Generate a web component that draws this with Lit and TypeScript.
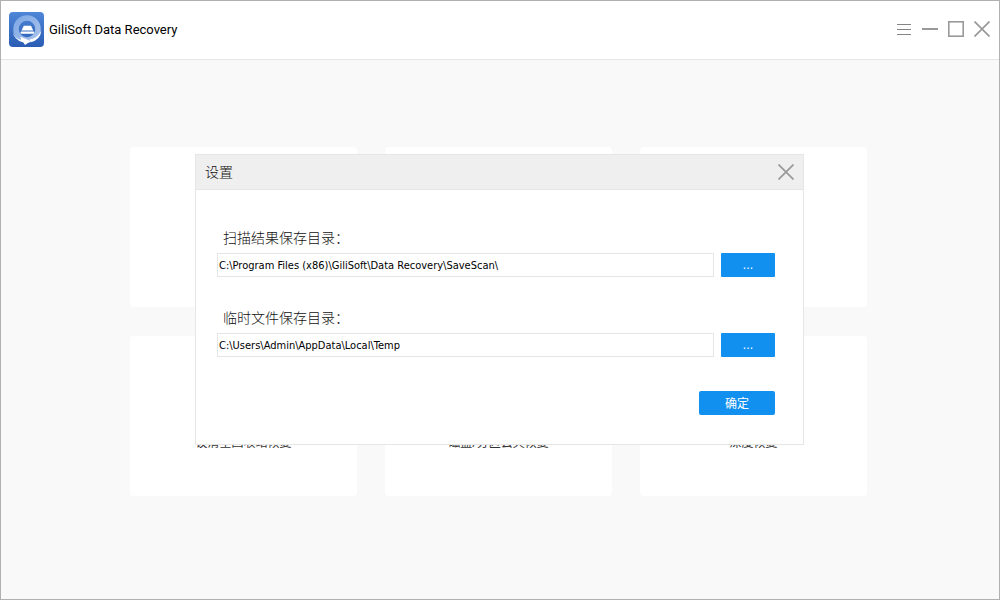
import { LitElement, html, css, svg } from "lit";
import { customElement, property } from "lit/decorators.js";

const cross = svg`<path d="M0.5 0.5 L15.5 15.5 M15.5 0.5 L0.5 15.5" />`;

@customElement("title-bar")
export class TitleBar extends LitElement {
  static styles = css`
    :host {
      display: block;
    }
    .bar {
      display: flex;
      align-items: center;
      box-sizing: border-box;
      height: 59px;
      padding: 0 8px 2px;
      background: #fff;
      border-bottom: 1px solid #e6e6e6;
    }
    .logo {
      display: block;
      width: 35px;
      height: 35px;
    }
    .name {
      flex: 1;
      margin: 0;
      padding: 2px 0 0 5px;
      font-family: Roboto, sans-serif;
      font-size: 13px;
      font-weight: 400;
      line-height: 18px;
      color: #000;
    }
    .controls {
      display: flex;
      gap: 8px;
    }
    .control {
      display: flex;
      align-items: center;
      justify-content: center;
      width: 18px;
      height: 18px;
      padding: 0;
      border: 0;
      background: none;
    }
    .glyph {
      display: block;
      width: 16px;
      height: 16px;
      fill: none;
      stroke: #999;
      stroke-width: 2;
    }
    .cross {
      stroke-width: 1.7;
    }
    .thin {
      stroke-width: 1;
      stroke: #858585;
    }
  `;

  render() {
    return html`
      <header class="bar">
        <svg class="logo" viewBox="0 0 35 35" aria-hidden="true">
          <defs>
            <linearGradient id="tile" x1="0" y1="0" x2="0" y2="1">
              <stop offset="0" stop-color="#4f86d8" />
              <stop offset="1" stop-color="#2a5db3" />
            </linearGradient>
            <linearGradient id="ring" x1="0" y1="0" x2="1" y2="1">
              <stop offset="0" stop-color="#7fa9e6" />
              <stop offset="1" stop-color="#a9c3ea" />
            </linearGradient>
          </defs>
          <rect width="35" height="35" rx="4" fill="url(#tile)" />
          <circle cx="18" cy="17" r="11" fill="none" stroke="url(#ring)" stroke-width="5.5" />
          <path d="M3.7 18.5 Q5 26 12 28 L11.5 24.7 L21.7 29 L16 33 L14.5 30.5 Q4.5 28 3.7 18.5 Z" fill="#fff" />
          <path d="M32.3 18.5 Q31.5 28 21.7 30 L20.5 27.6 Q28.5 26.5 32.3 18.5 Z" fill="#fff" />
          <path d="M14.8 13.8 H22 L24.3 18.6 H12.5 Z" fill="#fff" />
          <rect x="11.5" y="19.5" width="13.7" height="2.3" rx="1" fill="#fff" />
        </svg>
        <h1 class="name">GiliSoft Data Recovery</h1>
        <div class="controls">
          <button class="control" aria-label="Menu">
            <svg class="glyph thin" viewBox="0 0 16 16">
              <path d="M1 3.5 H15 M1 8.5 H15 M1 13.5 H15" />
            </svg>
          </button>
          <button class="control" aria-label="Minimize">
            <svg class="glyph" viewBox="0 0 16 16"><path d="M0 8 H16" /></svg>
          </button>
          <button class="control" aria-label="Maximize">
            <svg class="glyph" viewBox="0 0 16 16">
              <rect x="0.8" y="0.8" width="14.4" height="14.4" stroke-width="1.6" />
            </svg>
          </button>
          <button class="control" aria-label="Close">
            <svg class="glyph cross" viewBox="0 0 16 16">${cross}</svg>
          </button>
        </div>
      </header>
    `;
  }
}

@customElement("path-field")
export class PathField extends LitElement {
  @property() label = "";
  @property() path = "";

  static styles = css`
    :host {
      display: block;
    }
    .label {
      display: block;
      padding-left: 6px;
      margin-bottom: 5px;
      font-size: 14px;
      font-weight: 300;
      line-height: 20px;
      color: #111;
    }
    .row {
      display: flex;
      gap: 7px;
    }
    .input {
      flex: 1;
      min-width: 0;
      box-sizing: border-box;
      height: 24px;
      padding: 0 1px;
      border: 1px solid #e6e6e6;
      border-radius: 0;
      outline: 0;
      background: #fff;
      font-family: "DejaVu Sans Condensed", "DejaVu Sans", sans-serif;
      font-size: 11px;
      color: #000;
    }
    .browse {
      width: 54px;
      height: 24px;
      padding: 0;
      border: 0;
      border-radius: 1px;
      background: #1290f0;
      color: #fff;
      font-family: "DejaVu Sans Condensed", "DejaVu Sans", sans-serif;
      font-size: 12px;
    }
  `;

  render() {
    return html`
      <label class="label" for="path">${this.label}</label>
      <div class="row">
        <input class="input" id="path" type="text" spellcheck="false" .value=${this.path} />
        <button class="browse">...</button>
      </div>
    `;
  }
}

@customElement("settings-dialog")
export class SettingsDialog extends LitElement {
  static styles = css`
    :host {
      display: block;
    }
    .dialog {
      box-sizing: border-box;
      border: 1px solid #e6e6e6;
      background: #fff;
    }
    .head {
      display: flex;
      align-items: center;
      justify-content: space-between;
      height: 34px;
      padding: 0 9px;
      border-bottom: 1px solid #e6e6e6;
      background: #efefef;
    }
    .title {
      margin: 0;
      font-size: 14px;
      font-weight: 300;
      line-height: 20px;
      color: #111;
    }
    .close {
      display: flex;
      padding: 0;
      border: 0;
      background: none;
    }
    .glyph {
      display: block;
      width: 16px;
      height: 16px;
      fill: none;
      stroke: #999;
      stroke-width: 1.7;
    }
    .body {
      display: flex;
      flex-direction: column;
      gap: 31px;
      padding: 38px 28px 29px 21px;
    }
    .actions {
      display: flex;
      justify-content: flex-end;
      padding-top: 3px;
    }
    .ok {
      width: 76px;
      height: 24px;
      padding: 0;
      border: 0;
      border-radius: 2px;
      background: #1290f0;
      color: #fff;
      font-family: inherit;
      font-size: 12px;
    }
  `;

  render() {
    return html`
      <section class="dialog" role="dialog" aria-labelledby="title">
        <header class="head">
          <h2 class="title" id="title">设置</h2>
          <button class="close" aria-label="关闭">
            <svg class="glyph" viewBox="0 0 16 16">${cross}</svg>
          </button>
        </header>
        <div class="body">
          <path-field
            label="扫描结果保存目录："
            path="C:\\Program Files (x86)\\GiliSoft\\Data Recovery\\SaveScan\\"
          ></path-field>
          <path-field label="临时文件保存目录：" path="C:\\Users\\Admin\\AppData\\Local\\Temp"></path-field>
          <div class="actions"><button class="ok">确定</button></div>
        </div>
      </section>
    `;
  }
}

@customElement("app-root")
export class AppRoot extends LitElement {
  static styles = css`
    :host {
      display: block;
      font-family: "Noto Sans", "Noto Sans CJK SC", sans-serif;
    }
    .window {
      position: relative;
      display: flex;
      flex-direction: column;
      box-sizing: border-box;
      min-height: 100vh;
      border: 1px solid #b0b0b0;
      background: #f9f9f9;
    }
    .modes {
      display: grid;
      grid-template-columns: repeat(3, 1fr);
      grid-auto-rows: 160px;
      gap: 29px 28px;
      padding: 87px 132px 28px 129px;
    }
    .card {
      display: flex;
      align-items: flex-end;
      justify-content: center;
      box-sizing: border-box;
      padding-bottom: 44px;
      border-radius: 4px;
      background: #fff;
      font-size: 12px;
      line-height: 18px;
      color: #333;
    }
    .overlay {
      position: absolute;
      inset: -1px 0 0 -1px;
      display: grid;
      grid-template-columns: minmax(0, 609px);
      place-content: center;
    }
  `;

  private modes = ["", "", "", "误清空回收站恢复", "磁盘/分区丢失恢复", "深度恢复"];

  render() {
    return html`
      <div class="window">
        <title-bar></title-bar>
        <main class="modes">${this.modes.map((name) => html`<div class="card">${name}</div>`)}</main>
        <div class="overlay"><settings-dialog></settings-dialog></div>
      </div>
    `;
  }
}
